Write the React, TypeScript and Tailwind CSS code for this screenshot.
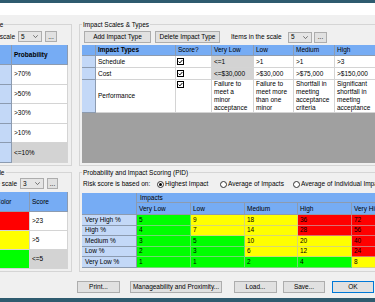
import React from "react";

const HB = "bg-[#76acf4]";
const RB = "bg-[#c3d8f7]";
const HBD = "border-[#8c9bb0]";
const CBD = "border-[#d4d4d4]";

function Group({ title, h, titleLeft, children }: { title: string; h: string; titleLeft: string; children?: React.ReactNode }) {
  return (
    <div className={"relative shrink-0 border border-[#d5d5d5] flex flex-col " + h}>
      <span className={"absolute top-[-5px] bg-[#f0f0f0] px-[1px] leading-[9px] whitespace-nowrap " + titleLeft}>{title}</span>
      {children}
    </div>
  );
}

function Select({ v, cls = "" }: { v: string; cls?: string }) {
  return (
    <div className={"h-[11px] w-[24px] shrink-0 border border-[#adadad] bg-[#e5e5e5] flex items-center justify-between pl-[2px] pr-[3px] " + cls}>
      <span>{v}</span>
      <svg width="5" height="3" viewBox="0 0 5 3">
        <path d="M0.3 0.3 L2.5 2.6 L4.7 0.3" fill="none" stroke="#555" strokeWidth="0.8" />
      </svg>
    </div>
  );
}

function Dots({ cls = "" }: { cls?: string }) {
  return (
    <div className={"h-[11px] shrink-0 border border-[#adadad] bg-[#e1e1e1] flex items-center justify-center leading-[6px] " + cls}>...</div>
  );
}

function Btn({ cls = "", children }: { cls?: string; children: React.ReactNode }) {
  return (
    <div className={"h-[12px] shrink-0 border bg-[#e1e1e1] flex items-center justify-center whitespace-nowrap " + cls}>{children}</div>
  );
}

function Check() {
  return (
    <svg width="7" height="7" viewBox="0 0 7 7" className="ml-[1px]">
      <rect x="0.5" y="0.5" width="6" height="6" fill="#fff" stroke="#000" strokeWidth="1" />
      <path d="M1.6 3.6 L2.9 4.9 L5.4 2" fill="none" stroke="#000" strokeWidth="1" />
    </svg>
  );
}

function Radio({ on, label, w }: { on?: boolean; label: string; w: string }) {
  return (
    <div className={"flex items-center shrink-0 whitespace-nowrap " + w}>
      <div className="w-[7px] h-[7px] rounded-full border border-[#333] bg-white flex items-center justify-center mr-[1px]">
        {on && <div className="w-[3px] h-[3px] rounded-full bg-black" />}
      </div>
      <span>{label}</span>
    </div>
  );
}

const GREEN = "bg-[#00ff00]";
const YELLOW = "bg-[#ffff00]";
const RED = "bg-[#ff0000]";

const pidRows: { name: string; cells: [string, string][] }[] = [
  { name: "Very High %", cells: [["5", GREEN], ["9", YELLOW], ["18", YELLOW], ["36", RED], ["72", RED]] },
  { name: "High %", cells: [["4", GREEN], ["7", YELLOW], ["14", YELLOW], ["28", RED], ["56", RED]] },
  { name: "Medium %", cells: [["3", GREEN], ["5", GREEN], ["10", YELLOW], ["20", YELLOW], ["40", RED]] },
  { name: "Low %", cells: [["2", GREEN], ["3", GREEN], ["6", YELLOW], ["12", YELLOW], ["24", RED]] },
  { name: "Very Low %", cells: [["1", GREEN], ["1", GREEN], ["2", GREEN], ["4", GREEN], ["8", YELLOW]] },
];
const pidW = ["w-[54px]", "w-[54px]", "w-[53px]", "w-[54px]", "w-[54px]"];
const pidHead = ["Very Low", "Low", "Medium", "High", "Very High"];

export default function App() {
  return (
    <div className="w-[375px] h-[302px] overflow-hidden bg-[#f0f0f0] flex flex-col font-['Liberation_Sans',Arial,sans-serif] text-[6.5px] leading-[8px] text-black">
      <div className="h-[3px] shrink-0 bg-[#2f5b6f]" />
      <div className="h-[12px] shrink-0 bg-white" />
      <div className="flex shrink-0 mt-[9px] h-[248px]">
        {/* Left column */}
        <div className="w-[132px] ml-[-60px] shrink-0 flex flex-col">
          <Group title="Probability Scale" h="h-[142px]" titleLeft="left-[13px]">
            <div className="flex items-center mt-[6px] h-[11px]">
              <div className="w-[74px] text-right whitespace-nowrap">Items in the scale</div>
              <Select v="5" cls="ml-[3px]" />
              <Dots cls="ml-[3px] w-[12px]" />
            </div>
            <div className="mt-[3px] ml-[9px] flex flex-col">
              <div className="flex h-[20px]">
                <div className={"w-[62px] border-r border-b " + HB + " " + HBD} />
                <div className={"w-[56px] border-r border-b flex items-center pl-[2px] font-bold " + HB + " " + HBD}>Probability</div>
              </div>
              {[">70%", ">50%", ">30%", ">10%", "<=10%"].map((t, i) => (
                <div key={t} className="flex h-[19.6px]">
                  <div className={"w-[62px] border-r border-b " + RB + " " + HBD} />
                  <div className={"w-[56px] border-r border-b flex items-center pl-[2px] " + CBD + " " + (i === 4 ? "bg-[#d3d3d3]" : "bg-white")}>{t}</div>
                </div>
              ))}
            </div>
          </Group>
          <Group title="Risk Score Scale" h="h-[100px] mt-[6px]" titleLeft="left-[13px]">
            <div className="flex items-center mt-[5px] h-[11px]">
              <div className="w-[76px] text-right whitespace-nowrap">Items in the scale</div>
              <Select v="3" cls="ml-[3px]" />
              <Dots cls="ml-[3px] w-[11px]" />
            </div>
            <div className="mt-[3px] ml-[9px] flex flex-col">
              <div className="flex h-[20px]">
                <div className={"w-[44px] border-r border-b " + HB + " " + HBD} />
                <div className={"w-[36px] border-r border-b flex items-center pl-[2px] " + HB + " " + HBD}>Color</div>
                <div className={"w-[38px] border-r border-b flex items-center pl-[2px] " + HB + " " + HBD}>Score</div>
              </div>
              {[
                [RED, ">23", "bg-white"],
                [YELLOW, ">5", "bg-white"],
                [GREEN, "<=5", "bg-[#d3d3d3]"],
              ].map(([c, t, b]) => (
                <div key={t} className="flex h-[19px]">
                  <div className={"w-[44px] border-r border-b " + RB + " " + HBD} />
                  <div className={"w-[36px] border-r border-b " + CBD + " " + c} />
                  <div className={"w-[38px] border-r border-b flex items-center pl-[2px] " + CBD + " " + b}>{t}</div>
                </div>
              ))}
            </div>
          </Group>
        </div>

        {/* Right column */}
        <div className="w-[330px] ml-[7px] shrink-0 flex flex-col">
          <Group title="Impact Scales & Types" h="h-[142px]" titleLeft="left-[2px]">
            <div className="flex items-center mt-[6px] h-[12px]">
              <Btn cls="ml-[4px] w-[67px] border-[#adadad]">Add Impact Type</Btn>
              <Btn cls="ml-[4px] w-[65px] border-[#adadad]">Delete Impact Type</Btn>
              <div className="ml-[11px] w-[54px] whitespace-nowrap">Items in the scale</div>
              <Select v="5" cls="ml-[3px]" />
              <Dots cls="ml-[2px] w-[13px]" />
            </div>
            <div className="mt-[2px] ml-[2px] flex flex-col">
              <div className="flex h-[11px]">
                <div className={"w-[14px] shrink-0 border-r border-b " + HB + " " + HBD} />
                <div className={"w-[80px] shrink-0 border-r border-b flex items-center pl-[2px] font-bold " + HB + " " + HBD}>Impact Types</div>
                <div className={"w-[36px] shrink-0 border-r border-b flex items-center pl-[2px] " + HB + " " + HBD}>Score?</div>
                <div className={"w-[42px] shrink-0 border-r border-b flex items-center pl-[2px] " + HB + " " + HBD}>Very Low</div>
                <div className={"w-[40px] shrink-0 border-r border-b flex items-center pl-[2px] " + HB + " " + HBD}>Low</div>
                <div className={"w-[41px] shrink-0 border-r border-b flex items-center pl-[2px] " + HB + " " + HBD}>Medium</div>
                <div className={"w-[41px] shrink-0 border-r border-b flex items-center pl-[2px] " + HB + " " + HBD}>High</div>
                <div className={"w-[41px] shrink-0 border-r border-b flex items-center pl-[2px] " + HB + " " + HBD}>Very High</div>
              </div>
              {[
                ["Schedule", "<=1", ">1", ">1", ">3", ">5"],
                ["Cost", "<=$30,000", ">$30,000", ">$75,000", ">$150,000", ">$300,000"],
              ].map((r) => (
                <div key={r[0]} className="flex h-[12px]">
                  <div className={"w-[14px] shrink-0 border-r border-b " + RB + " " + HBD} />
                  <div className={"w-[80px] shrink-0 border-r border-b bg-white flex items-center pl-[2px] " + CBD}>{r[0]}</div>
                  <div className={"w-[36px] shrink-0 border-r border-b bg-white flex items-center " + CBD}><Check /></div>
                  <div className={"w-[42px] shrink-0 border-r border-b bg-[#d3d3d3] flex items-center pl-[2px] whitespace-nowrap " + CBD}>{r[1]}</div>
                  <div className={"w-[40px] shrink-0 border-r border-b bg-white flex items-center pl-[2px] whitespace-nowrap " + CBD}>{r[2]}</div>
                  <div className={"w-[41px] shrink-0 border-r border-b bg-white flex items-center pl-[2px] whitespace-nowrap " + CBD}>{r[3]}</div>
                  <div className={"w-[41px] shrink-0 border-r border-b bg-white flex items-center pl-[2px] whitespace-nowrap " + CBD}>{r[4]}</div>
                  <div className={"w-[41px] shrink-0 border-r border-b bg-white flex items-center pl-[2px] whitespace-nowrap " + CBD}>{r[5]}</div>
                </div>
              ))}
              <div className="flex h-[33px]">
                <div className={"w-[14px] shrink-0 border-r border-b " + RB + " " + HBD} />
                <div className={"w-[80px] shrink-0 border-r border-b bg-white flex items-center pl-[2px] " + CBD}>Performance</div>
                <div className={"w-[36px] shrink-0 border-r border-b bg-white pt-[1px] " + CBD}><Check /></div>
                <div className={"w-[42px] shrink-0 border-r border-b bg-white pl-[2px] overflow-hidden whitespace-nowrap " + CBD}>Failure to<br />meet a<br />minor<br />acceptance</div>
                <div className={"w-[40px] shrink-0 border-r border-b bg-white pl-[2px] overflow-hidden whitespace-nowrap " + CBD}>Failure to<br />meet more<br />than one<br />minor</div>
                <div className={"w-[41px] shrink-0 border-r border-b bg-white pl-[2px] overflow-hidden whitespace-nowrap " + CBD}>Shortfall in<br />meeting<br />acceptance<br />criteria</div>
                <div className={"w-[41px] shrink-0 border-r border-b bg-white pl-[2px] overflow-hidden whitespace-nowrap " + CBD}>Significant<br />shortfall in<br />meeting<br />acceptance</div>
                <div className={"w-[41px] shrink-0 border-r border-b bg-white pl-[2px] overflow-hidden whitespace-nowrap " + CBD}>Failure to<br />meet key<br />acceptance<br />criteria</div>
              </div>
              <div className="h-[50px] w-[340px] bg-[#a0a0a0]" />
            </div>
          </Group>
          <Group title="Probability and Impact Scoring (PID)" h="h-[100px] mt-[6px]" titleLeft="left-[2px]">
            <div className="flex items-center mt-[7px] h-[8px]">
              <div className="ml-[3px] w-[74px] whitespace-nowrap">Risk score is based on:</div>
              <Radio on label="Highest Impact" w="w-[63px]" />
              <Radio label="Average of Impacts" w="w-[73px]" />
              <Radio label="Average of Individual Impacts" w="w-[110px]" />
            </div>
            <div className="mt-[5px] ml-[2px] flex flex-col">
              <div className="flex">
                <div className={"w-[55px] h-[22px] shrink-0 border-r border-b " + HB + " " + HBD} />
                <div className="flex flex-col">
                  <div className={"h-[10px] w-[269px] border-b flex items-center pl-[3px] " + HB + " " + HBD}>Impacts</div>
                  <div className="flex h-[12px]">
                    {pidHead.map((t, i) => (
                      <div key={t} className={"shrink-0 border-r border-b flex items-center pl-[2px] " + pidW[i] + " " + HB + " " + HBD}>{t}</div>
                    ))}
                  </div>
                </div>
              </div>
              {pidRows.map((r) => (
                <div key={r.name} className="flex h-[10.5px]">
                  <div className={"w-[55px] shrink-0 border-r border-b flex items-center pl-[3px] " + RB + " " + HBD}>{r.name}</div>
                  {r.cells.map(([v, c], i) => (
                    <div key={i} className={"shrink-0 border-r border-b border-[rgba(190,190,190,0.6)] flex items-center pl-[2px] " + pidW[i] + " " + c}>{v}</div>
                  ))}
                </div>
              ))}
            </div>
          </Group>
        </div>
      </div>

      <div className="flex shrink-0 mt-[9px]">
        <Btn cls="ml-[77px] w-[43px] border-[#adadad]">Print...</Btn>
        <Btn cls="ml-[10px] w-[92px] border-[#adadad]">Manageability and Proximity...</Btn>
        <Btn cls="ml-[12px] w-[43px] border-[#adadad]">Load...</Btn>
        <Btn cls="ml-[6px] w-[42px] border-[#adadad]">Save...</Btn>
        <Btn cls="ml-[7px] w-[42px] border-[#0078d7]">OK</Btn>
      </div>
      <div className="mt-auto h-[4px] shrink-0 bg-[#2f5b6f]" />
    </div>
  );
}
